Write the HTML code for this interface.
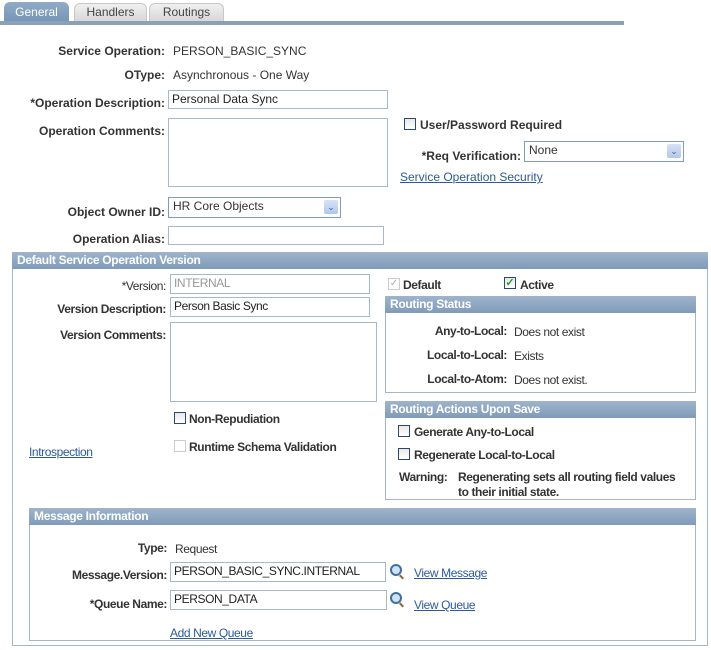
<!DOCTYPE html>
<html><head><style>
body{margin:0;width:711px;height:650px;background:#fff;position:relative;overflow:hidden;font-family:"Liberation Sans",Arial,sans-serif;font-size:12px;color:#333}
.a{position:absolute;white-space:nowrap}
.l{position:absolute;font-weight:bold;text-align:right;white-space:nowrap;color:#333}
.n{letter-spacing:-0.4px}
.v{position:absolute;white-space:nowrap;color:#333}
.in{position:absolute;border:1px solid #a9b8c7;background:#fff;box-sizing:border-box;padding:1px 3px;font-size:12px;color:#222;white-space:nowrap;overflow:hidden}
.lk{position:absolute;color:#2b5a9c;text-decoration:underline;white-space:nowrap}
.cb{position:absolute;width:12px;height:12px;border:1px solid #2b4a6a;background:linear-gradient(#e8e8e8,#fff);box-sizing:border-box}
.cbd{border-color:#ccc;background:#fff}
.box{position:absolute;border:1px solid #a6b6c8;box-sizing:border-box}
.hd{position:absolute;left:-1px;right:-1px;top:-1px;height:17px;background:linear-gradient(#9fb4cc,#7f9bb9);color:#fff;font-weight:bold;padding-left:5px;line-height:17px;border-radius:3px 3px 0 0;letter-spacing:-0.3px}
.sel{position:absolute;border:1px solid #7f9db9;box-sizing:border-box;background:#fff;padding:1px 4px}
.sel i{position:absolute;right:2px;top:2px;width:14px;height:14px;background:linear-gradient(#d6e2f5,#b3c7ec);border-radius:2px;font-style:normal;color:#4a5f80;font-size:9px;text-align:center;line-height:14px}
.mag{position:absolute;width:8px;height:8px;border:2px solid #3f6f9f;border-radius:50%;background:#cfe2f4}
.mag:after{content:"";position:absolute;width:5px;height:2px;background:#8a6a3a;left:7px;top:10px;transform:rotate(45deg)}
</style></head><body>
<div class="a" style="left:4px;top:2px;width:65px;height:19px;background:linear-gradient(#90abc7,#7796b6);border-radius:6px 6px 0 0;color:#fff;text-align:center;line-height:20px;font-size:12px">General</div>
<div class="a" style="left:74px;top:3px;width:71px;height:17px;background:linear-gradient(#f0f0f0,#d8d8d8);border:1px solid #c8c8c8;border-bottom:none;border-radius:6px 6px 0 0;color:#444;text-align:center;line-height:17px">Handlers</div>
<div class="a" style="left:149px;top:3px;width:73px;height:17px;background:linear-gradient(#f0f0f0,#d8d8d8);border:1px solid #c8c8c8;border-bottom:none;border-radius:6px 6px 0 0;color:#444;text-align:center;line-height:17px">Routings</div>
<div class="a" style="left:0;top:21px;width:624px;height:4px;background:#8aa1b9"></div>

<div class="l" style="right:546px;top:44px">Service Operation:</div><div class="v" style="left:173px;top:44px">PERSON_BASIC_SYNC</div>
<div class="l" style="right:546px;top:68px">OType:</div><div class="v" style="left:173px;top:68px">Asynchronous - One Way</div>
<div class="l" style="right:546px;top:96px">*Operation Description:</div><div class="in" style="left:168px;top:90px;width:220px;height:19px">Personal Data Sync</div>
<div class="l" style="right:546px;top:124px">Operation Comments:</div><div class="in" style="left:168px;top:118px;width:220px;height:69px"></div>
<div class="cb" style="left:404px;top:118px"></div><div class="l" style="left:420px;top:118px">User/Password Required</div>
<div class="l" style="right:190px;top:149px">*Req Verification:</div><div class="sel" style="left:524px;top:141px;width:160px;height:21px">None<i>&#8964;</i></div>
<div class="lk" style="left:400px;top:170px">Service Operation Security</div>
<div class="l" style="right:546px;top:205px">Object Owner ID:</div><div class="sel" style="left:168px;top:197px;width:173px;height:21px">HR Core Objects<i>&#8964;</i></div>
<div class="l" style="right:546px;top:232px">Operation Alias:</div><div class="in" style="left:168px;top:226px;width:216px;height:19px"></div>

<div class="box" style="left:12px;top:252px;width:696px;height:394px"><div class="hd">Default Service Operation Version</div></div>
<div class="l n" style="right:545px;top:279px;font-weight:normal">*Version:</div><div class="in n" style="left:170px;top:274px;width:200px;height:20px;color:#999">INTERNAL</div>
<div class="l n" style="right:545px;top:302px">Version Description:</div><div class="in n" style="left:170px;top:297px;width:200px;height:20px">Person Basic Sync</div>
<div class="l n" style="right:545px;top:328px">Version Comments:</div><div class="in" style="left:170px;top:322px;width:207px;height:80px"></div>
<div class="cb cbd" style="left:388px;top:278px;color:#aaa;font-size:10px;line-height:10px;text-align:center">&#10003;</div><div class="l n" style="left:403px;top:278px">Default</div>
<div class="cb" style="left:504px;top:277px;color:#2a9a2a;font-size:11px;line-height:10px;text-align:center;font-weight:bold">&#10003;</div><div class="l n" style="left:520px;top:278px">Active</div>

<div class="box" style="left:385px;top:296px;width:311px;height:97px"><div class="hd">Routing Status</div></div>
<div class="l n" style="right:204px;top:324px">Any-to-Local:</div><div class="v n" style="left:514px;top:325px">Does not exist</div>
<div class="l n" style="right:204px;top:348px">Local-to-Local:</div><div class="v n" style="left:514px;top:349px">Exists</div>
<div class="l n" style="right:204px;top:372px">Local-to-Atom:</div><div class="v n" style="left:514px;top:373px">Does not exist.</div>

<div class="box" style="left:385px;top:401px;width:311px;height:99px"><div class="hd">Routing Actions Upon Save</div></div>
<div class="cb" style="left:398px;top:425px"></div><div class="l n" style="left:414px;top:425px">Generate Any-to-Local</div>
<div class="cb" style="left:398px;top:448px"></div><div class="l n" style="left:414px;top:448px">Regenerate Local-to-Local</div>
<div class="l n" style="left:399px;top:470px">Warning:</div><div class="l n" style="left:458px;top:470px;text-align:left;line-height:15px">Regenerating sets all routing field values<br>to their initial state.</div>

<div class="cb" style="left:174px;top:412px"></div><div class="l n" style="left:189px;top:412px">Non-Repudiation</div>
<div class="cb cbd" style="left:174px;top:440px"></div><div class="l n" style="left:189px;top:440px">Runtime Schema Validation</div>
<div class="lk n" style="left:29px;top:445px">Introspection</div>

<div class="box" style="left:29px;top:508px;width:667px;height:133px"><div class="hd">Message Information</div></div>
<div class="l n" style="right:544px;top:541px">Type:</div><div class="v n" style="left:175px;top:542px">Request</div>
<div class="l n" style="right:544px;top:568px">Message.Version:</div><div class="in n" style="left:170px;top:562px;width:216px;height:20px">PERSON_BASIC_SYNC.INTERNAL</div>
<div class="mag" style="left:390px;top:564px"></div><div class="lk n" style="left:414px;top:566px">View Message</div>
<div class="l n" style="right:544px;top:597px">*Queue Name:</div><div class="in n" style="left:170px;top:590px;width:217px;height:20px">PERSON_DATA</div>
<div class="mag" style="left:390px;top:592px"></div><div class="lk n" style="left:414px;top:598px">View Queue</div>
<div class="lk n" style="left:170px;top:626px">Add New Queue</div>
</body></html>
